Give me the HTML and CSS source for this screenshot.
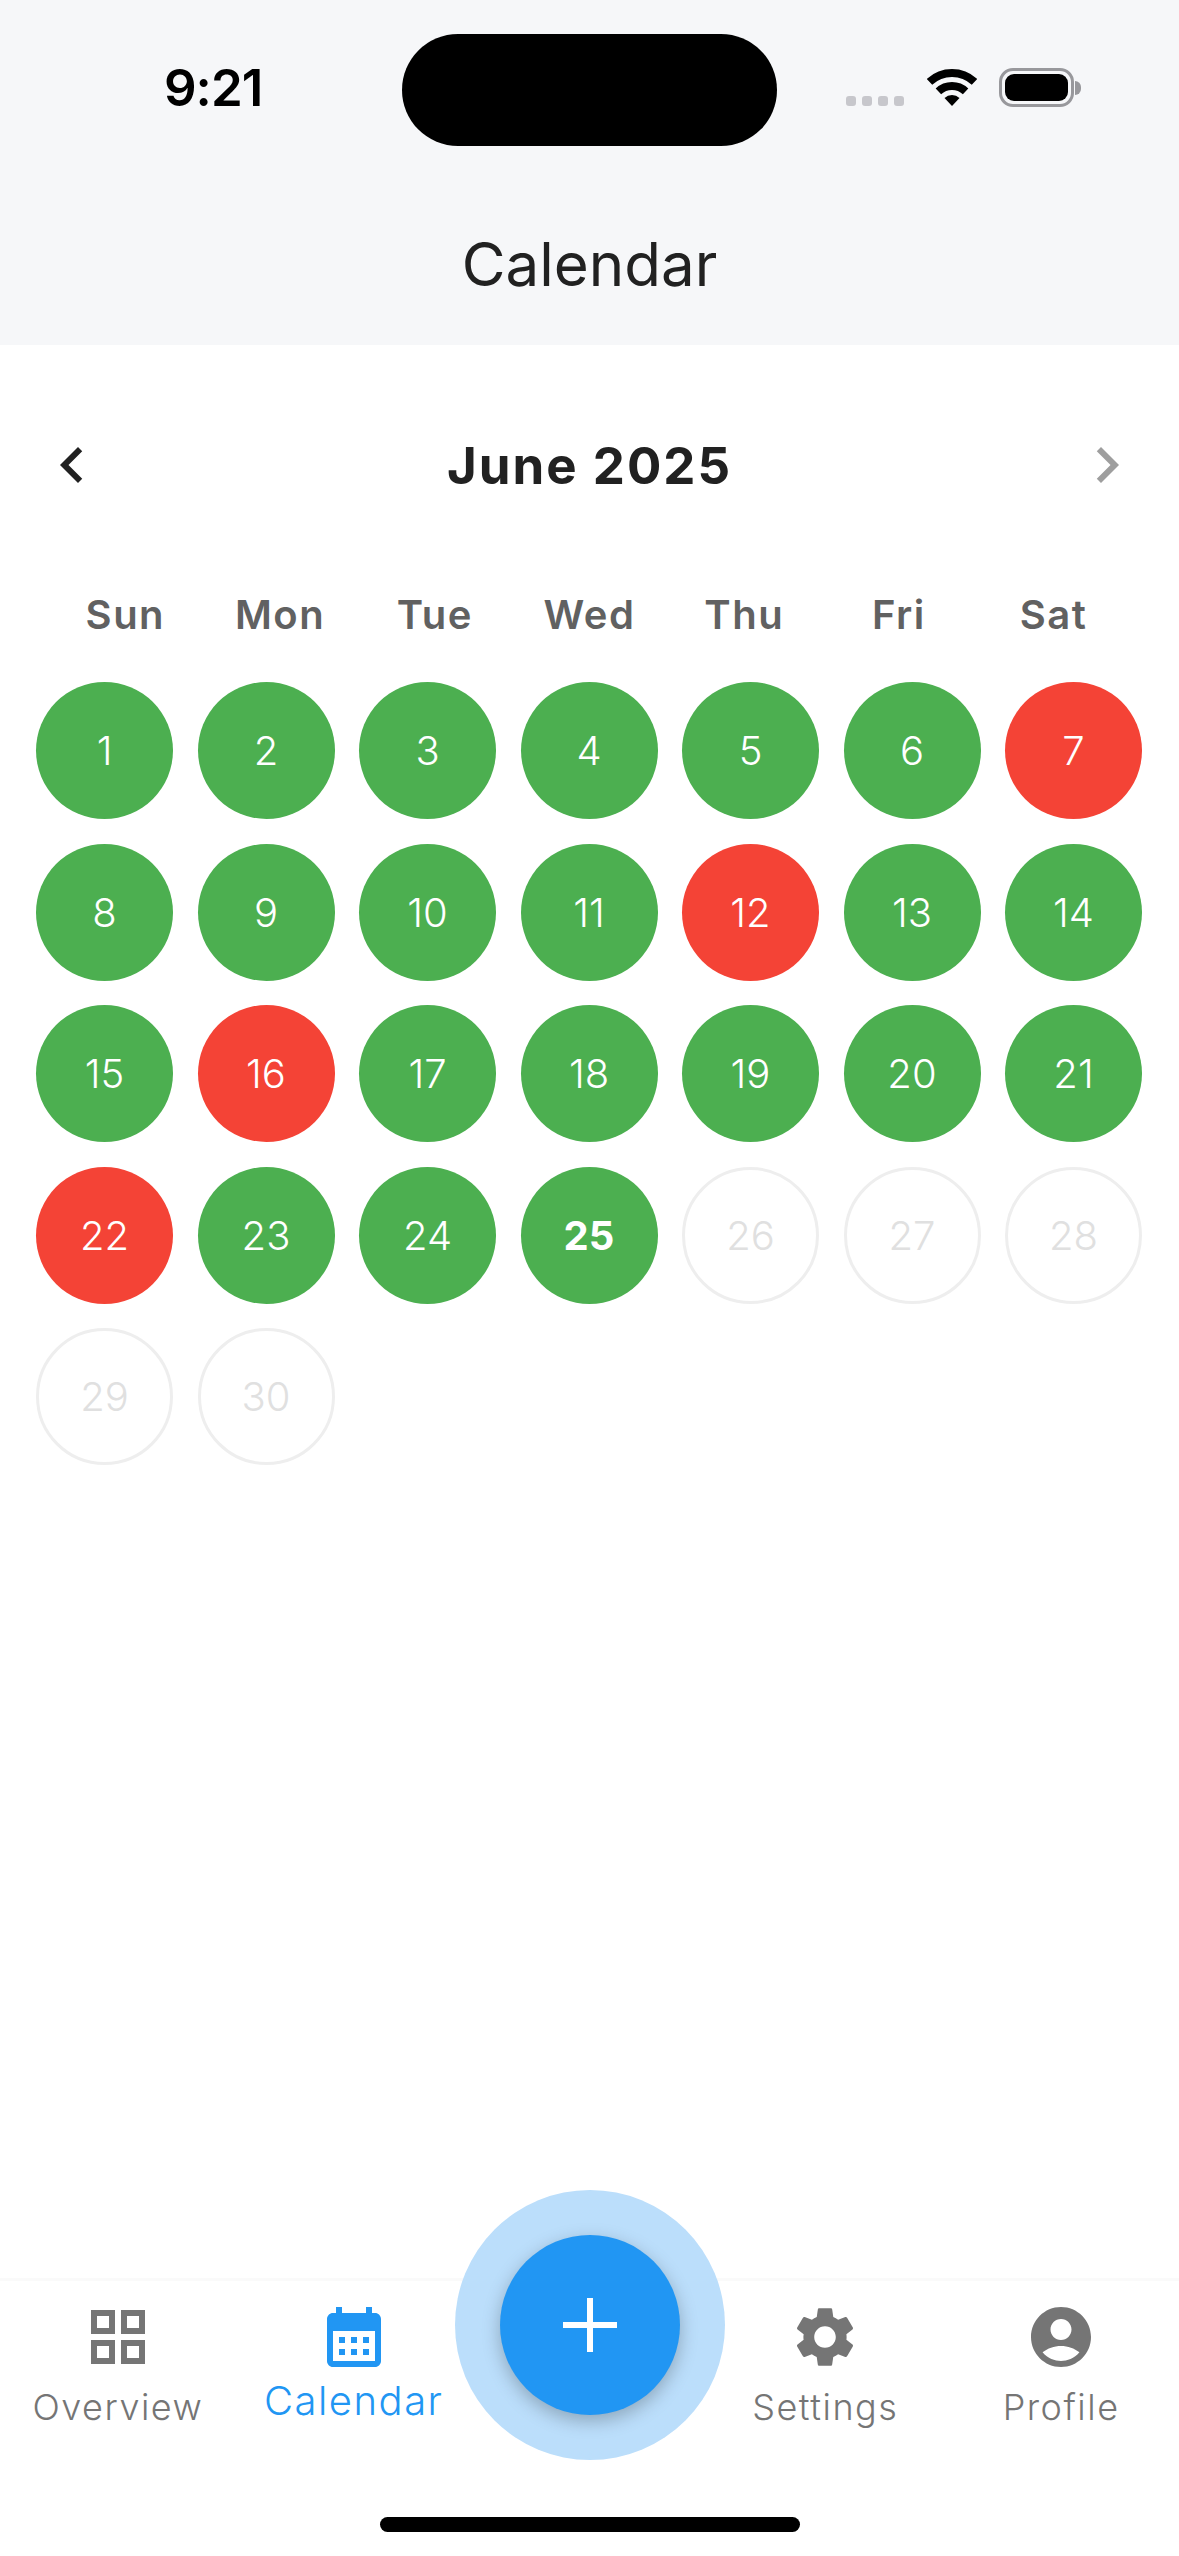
FILE: index.html
```html
<!DOCTYPE html>
<html lang="en">
<head>
  <meta charset="UTF-8" />
  <meta name="viewport" content="width=device-width, initial-scale=1.0"/>
  <title>Calendar</title>
  <link rel="stylesheet" href="styles.css">
</head>
<body>
  <div class="app">
    <header class="top">
      <div class="status">
        <span class="time">9:21</span>
        <div class="status-icons">
          <div class="signal"><i></i><i></i><i></i><i></i></div>
          <svg class="wifi" width="50" height="37" viewBox="0 0 50 37">
            <path d="M2.5 12.9A33 33 0 0 1 47.5 12.9" fill="none" stroke="#000" stroke-width="8"/>
            <path d="M11.4 22.4A20 20 0 0 1 38.6 22.4" fill="none" stroke="#000" stroke-width="8"/>
            <path d="M25 37L17.5 29A11 11 0 0 1 32.5 29Z" fill="#000"/>
          </svg>
          <div class="battery"><div class="battery-fill"></div></div>
          <div class="battery-cap"></div>
        </div>
      </div>
      <div class="island"></div>
      <h1>Calendar</h1>
    </header>

    <main class="content">
      <div class="month-nav">
        <svg class="icon" viewBox="0 0 24 24"><path fill="#212121" d="M15.41 7.41L14 6l-6 6 6 6 1.41-1.41L10.83 12z"/></svg>
        <h2>June 2025</h2>
        <svg class="icon" viewBox="0 0 24 24"><path fill="#9e9e9e" d="M10 6L8.59 7.41 13.17 12l-4.58 4.59L10 18l6-6z"/></svg>
      </div>

      <div class="weekdays">
        <span>Sun</span><span>Mon</span><span>Tue</span><span>Wed</span><span>Thu</span><span>Fri</span><span>Sat</span>
      </div>

      <div class="days">
        <div class="day ok">1</div>
        <div class="day ok">2</div>
        <div class="day ok">3</div>
        <div class="day ok">4</div>
        <div class="day ok">5</div>
        <div class="day ok">6</div>
        <div class="day bad">7</div>
        <div class="day ok">8</div>
        <div class="day ok">9</div>
        <div class="day ok">10</div>
        <div class="day ok">11</div>
        <div class="day bad">12</div>
        <div class="day ok">13</div>
        <div class="day ok">14</div>
        <div class="day ok">15</div>
        <div class="day bad">16</div>
        <div class="day ok">17</div>
        <div class="day ok">18</div>
        <div class="day ok">19</div>
        <div class="day ok">20</div>
        <div class="day ok">21</div>
        <div class="day bad">22</div>
        <div class="day ok">23</div>
        <div class="day ok">24</div>
        <div class="day ok today">25</div>
        <div class="day future">26</div>
        <div class="day future">27</div>
        <div class="day future">28</div>
        <div class="day future">29</div>
        <div class="day future">30</div>
      </div>
    </main>

    <nav class="tabbar">
      <div class="tab">
        <svg class="icon" viewBox="0 0 24 24"><path fill="#757575" d="M3 3v8h8V3H3zm6 6H5V5h4v4zm-6 4v8h8v-8H3zm6 6H5v-4h4v4zm4-16v8h8V3h-8zm6 6h-4V5h4v4zm-6 4v8h8v-8h-8zm6 6h-4v-4h4v4z"/></svg>
        <span>Overview</span>
      </div>
      <div class="tab active">
        <svg class="icon" viewBox="0 0 24 24"><path fill="#2196f3" d="M19 4h-1V2h-2v2H8V2H6v2H5c-1.1 0-2 .9-2 2v14c0 1.1.9 2 2 2h14c1.1 0 2-.9 2-2V6c0-1.1-.9-2-2-2zm0 16H5V10h14v10zM9 14H7v-2h2v2zm4 0h-2v-2h2v2zm4 0h-2v-2h2v2zm-8 4H7v-2h2v2zm4 0h-2v-2h2v2zm4 0h-2v-2h2v2z"/></svg>
        <span>Calendar</span>
      </div>
      <div class="tab-spacer"></div>
      <div class="tab">
        <svg class="icon" viewBox="0 0 24 24"><path fill="#757575" d="M19.14 12.94c.04-.3.06-.61.06-.94 0-.32-.02-.64-.07-.94l2.03-1.58c.18-.14.23-.41.12-.61l-1.92-3.32c-.12-.22-.37-.29-.59-.22l-2.39.96c-.5-.38-1.03-.7-1.62-.94l-.36-2.54c-.04-.24-.24-.41-.48-.41h-3.84c-.24 0-.43.17-.47.41l-.36 2.54c-.59.24-1.13.57-1.62.94l-2.39-.96c-.22-.08-.47 0-.59.22L2.74 8.87c-.12.21-.08.47.12.61l2.03 1.58c-.05.3-.09.63-.09.94s.02.64.07.94l-2.03 1.58c-.18.14-.23.41-.12.61l1.92 3.32c.12.22.37.29.59.22l2.39-.96c.5.38 1.03.7 1.62.94l.36 2.54c.05.24.24.41.48.41h3.84c.24 0 .44-.17.47-.41l.36-2.54c.59-.24 1.13-.56 1.62-.94l2.39.96c.22.08.47 0 .59-.22l1.92-3.32c.12-.22.07-.47-.12-.61l-2.01-1.58zM12 15.6c-1.98 0-3.6-1.62-3.6-3.6s1.62-3.6 3.6-3.6 3.6 1.62 3.6 3.6-1.62 3.6-3.6 3.6z"/></svg>
        <span>Settings</span>
      </div>
      <div class="tab">
        <svg class="icon" viewBox="0 0 24 24"><path fill="#757575" d="M12 2C6.48 2 2 6.48 2 12s4.48 10 10 10 10-4.48 10-10S17.52 2 12 2zm0 4c1.93 0 3.5 1.57 3.5 3.5S13.93 13 12 13s-3.5-1.57-3.5-3.5S10.07 6 12 6zm0 14c-2.03 0-4.43-.82-6.14-2.88C7.55 15.8 9.68 15 12 15s4.45.8 6.14 2.12C16.43 19.18 14.03 20 12 20z"/></svg>
        <span>Profile</span>
      </div>

      <div class="fab-ring">
        <div class="fab">
          <svg width="54" height="54" viewBox="0 0 54 54"><path d="M27 0V54M0 27H54" stroke="#fff" stroke-width="6"/></svg>
        </div>
      </div>
      <div class="home-bar"></div>
    </nav>
  </div>
</body>
</html>
```

FILE: styles.css
```css
* {
  box-sizing: border-box;
}
body {
  margin: 0;
  background: #fff;
  font-family: Inter, "Noto Sans", sans-serif;
  color: #212121;
}
.app {
  width: 1179px;
  height: 2556px;
  display: flex;
  flex-direction: column;
  overflow: hidden;
}
.icon {
  width: 72px;
  height: 72px;
  display: block;
}

/* top area */
.top {
  position: relative;
  height: 345px;
  background: #f6f7f9;
}
.status {
  height: 178px;
  padding: 62px 98px 0 164px;
  display: flex;
  justify-content: space-between;
  align-items: flex-start;
}
.time {
  font-size: 51px;
  font-weight: 600;
  line-height: 52px;
  color: #000;
  letter-spacing: -1px;
}
.status-icons {
  display: flex;
  align-items: flex-end;
  margin-top: 6px;
}
.signal {
  display: flex;
  gap: 6px;
  margin-right: 23px;
}
.signal i {
  width: 10px;
  height: 10px;
  border-radius: 3px;
  background: #c7c7cc;
}
.wifi {
  display: block;
  margin-right: 22px;
}
.battery {
  width: 75px;
  height: 39px;
  margin-bottom: -1px;
  padding: 3px;
  border: 3px solid #98989c;
  border-radius: 14px;
}
.battery-fill {
  height: 100%;
  background: #000;
  border-radius: 9px;
}
.battery-cap {
  width: 6px;
  height: 14px;
  margin: 0 0 11px 1px;
  background: #98989c;
  border-radius: 0 6px 6px 0;
}
.island {
  position: absolute;
  left: 402px;
  top: 34px;
  width: 375px;
  height: 112px;
  border-radius: 56px;
  background: #000;
}
h1 {
  margin: 0;
  text-align: center;
  font-size: 60px;
  font-weight: 400;
  line-height: 76px;
  margin-top: 48px;
}

/* calendar */
.content {
  flex: 1;
}
.month-nav {
  display: flex;
  justify-content: space-between;
  align-items: center;
  padding: 84px 36px 0;
}
h2 {
  margin: 0;
  font-size: 51px;
  font-weight: 700;
  letter-spacing: 2px;
}
.weekdays {
  display: grid;
  grid-template-columns: repeat(7, 1fr);
  padding: 0 48px;
  margin-top: 90px;
  height: 48px;
  line-height: 48px;
  text-align: center;
  font-size: 40px;
  font-weight: 600;
  letter-spacing: 1.5px;
  color: #616161;
}
.days {
  display: grid;
  grid-template-columns: repeat(7, 137px);
  justify-content: space-between;
  row-gap: 24.6px;
  padding: 0 37px 0 36px;
  margin-top: 43px;
}
.day {
  height: 137px;
  border-radius: 50%;
  display: flex;
  align-items: center;
  justify-content: center;
  font-size: 40px;
  font-weight: 300;
  color: #fff;
}
.ok {
  background: #4caf50;
}
.bad {
  background: #f44336;
}
.today {
  font-weight: 700;
}
.future {
  border: 3px solid #eeeeee;
  color: #e0e0e0;
}

/* bottom tabs */
.tabbar {
  position: relative;
  height: 278px;
  border-top: 3px solid #fafafa;
  display: grid;
  grid-template-columns: repeat(5, 1fr);
  align-items: start;
  padding-top: 20px;
}
.tab {
  display: flex;
  flex-direction: column;
  align-items: center;
  font-size: 36px;
  font-weight: 300;
  line-height: 44px;
  letter-spacing: 1.5px;
  color: #757575;
}
.tab span {
  margin-top: 12px;
}
.tab.active {
  font-size: 40px;
  color: #2196f3;
}
.tab.active span {
  margin-top: 6px;
}
.fab-ring {
  position: absolute;
  left: 454.5px;
  top: -91px;
  width: 270px;
  height: 270px;
  border-radius: 50%;
  background: #bbdefb;
  display: flex;
  align-items: center;
  justify-content: center;
}
.fab {
  width: 180px;
  height: 180px;
  border-radius: 50%;
  background: #2196f3;
  display: flex;
  align-items: center;
  justify-content: center;
  box-shadow: 0 6px 18px rgba(0, 0, 0, 0.25);
}
.home-bar {
  position: absolute;
  left: 380px;
  bottom: 24px;
  width: 420px;
  height: 15px;
  border-radius: 8px;
  background: #000;
}
```
